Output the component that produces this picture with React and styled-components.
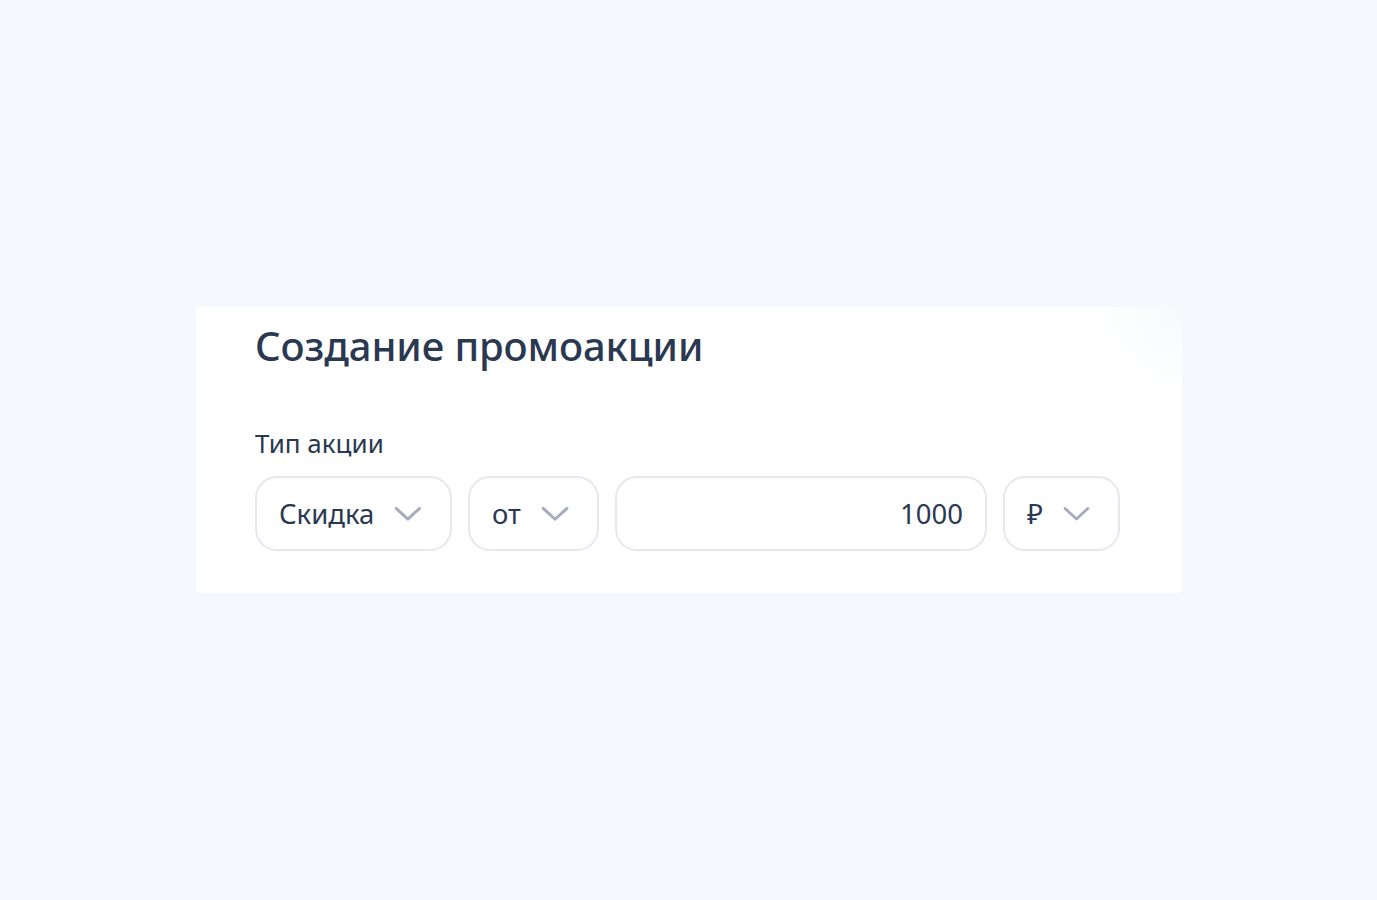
import styled, { createGlobalStyle } from "styled-components";

const GlobalStyle = createGlobalStyle`
    html, body {
        margin: 0;
        padding: 0;
        background: #f5f8fc;
        font-family: "Noto Sans", "Open Sans", sans-serif;
    }
`

const Page = styled.div`
    width: 1377px;
    height: 900px;
    padding-top: 307px;
    padding-left: 196px;
    box-sizing: border-box;
`
const Card = styled.div`
    width: 986px;
    height: 286px;
    box-sizing: border-box;
    padding: 14px 59px 0;
    background:
        radial-gradient(circle at 100% 0%, rgba(245,248,252,0.9) 0px, rgba(255,255,255,0) 90px),
        #fff;
`
const Title = styled.h1`
    margin: 0;
    font-size: 40px;
    line-height: 50px;
    font-weight: 500;
    color: #2b3852;
    letter-spacing: -0.1px;
`
const Label = styled.div`
    margin-top: 55px;
    font-size: 26px;
    line-height: 34px;
    color: #2b3852;
`
const Row = styled.div`
    display: flex;
    gap: 16px;
    margin-top: 16px;
`
const Field = styled.div`
    display: flex;
    align-items: center;
    justify-content: ${p => (p.$right ? "flex-end" : "flex-start")};
    gap: 20px;
    width: ${p => p.$w}px;
    height: 75px;
    box-sizing: border-box;
    padding: 0 ${p => p.$pr || 28}px 0 ${p => p.$pl || 22}px;
    border: 2px solid #e6e8f0;
    border-radius: 22px;
    font-size: 27.5px;
    color: #2b3852;
`
const Chevron = () => (
    <svg width="32" height="20" viewBox="0 0 32 20" fill="none">
        <path d="M2.5 3.5 L16 16 L29.5 3.5" stroke="#a5acbf" strokeWidth="3.4" strokeLinecap="round" strokeLinejoin="round" />
    </svg>
)

const App = () => {
    return (
        <>
            <GlobalStyle />
            <Page>
                <Card>
                    <Title>Создание промоакции</Title>
                    <Label>Тип акции</Label>
                    <Row>
                        <Field $w={197}>Скидка <Chevron /></Field>
                        <Field $w={131}>от <Chevron /></Field>
                        <Field $w={372} $right $pr={22}>1000</Field>
                        <Field $w={117}>₽ <Chevron /></Field>
                    </Row>
                </Card>
            </Page>
        </>
    );
};

export default App;
